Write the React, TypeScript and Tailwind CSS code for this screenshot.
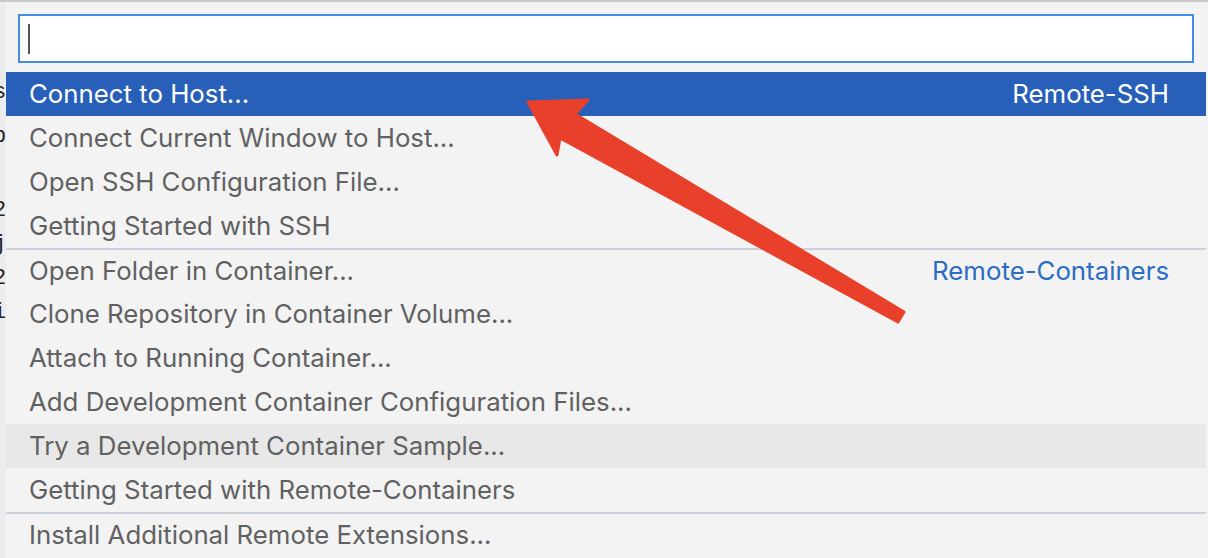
import React from 'react';

type Item = {
  label: string;
  detail?: string;
  selected?: boolean;
  hovered?: boolean;
  separator?: boolean;
};

const items: Item[] = [
  { label: 'Connect to Host...', detail: 'Remote-SSH', selected: true },
  { label: 'Connect Current Window to Host...' },
  { label: 'Open SSH Configuration File...' },
  { label: 'Getting Started with SSH' },
  { label: 'Open Folder in Container...', detail: 'Remote-Containers', separator: true },
  { label: 'Clone Repository in Container Volume...' },
  { label: 'Attach to Running Container...' },
  { label: 'Add Development Container Configuration Files...' },
  { label: 'Try a Development Container Sample...', hovered: true },
  { label: 'Getting Started with Remote-Containers' },
  { label: 'Install Additional Remote Extensions...', separator: true },
];

// bits of editor text peeking out on the left
const editorBits = [
  { ch: 's', top: 'mt-[80px]' },
  { ch: 'b', top: 'mt-[22px]' },
  { ch: '2', top: 'mt-[52px]' },
  { ch: 'j', top: 'mt-[12px]' },
  { ch: '2', top: 'mt-[12px]' },
  { ch: 'i', top: 'mt-[12px]' },
];

const Arrow = () => (
  <svg
    className="absolute inset-0 pointer-events-none"
    width="1208"
    height="558"
    viewBox="0 0 1208 558"
  >
    <polygon
      points="528,100 588,98 575,112 904,310 898,320 560,136 557,153"
      fill="#e8402a"
      stroke="#e8402a"
      strokeWidth="3"
      strokeLinejoin="round"
    />
  </svg>
);

export default function App() {
  return (
    <div className="relative w-[1208px] h-[558px] overflow-hidden bg-[#f3f3f3] border-t-2 border-[#c8c8c8] font-['Inter','Noto_Sans',sans-serif]">
      <div className="flex h-full">
        {/* editor behind the palette */}
        <div className="w-[6px] shrink-0 overflow-hidden bg-[#ececec] flex flex-col">
          {editorBits.map((b, i) => (
            <div
              key={i}
              className={`${b.top} -ml-[7px] h-[22px] font-['Liberation_Mono',monospace] text-[22px] leading-[22px] text-[#222]`}
            >
              {b.ch}
            </div>
          ))}
        </div>

        {/* quick pick */}
        <div className="flex-1 flex flex-col pt-[12px]">
          <div className="mx-[12px] mb-[9px] h-[49px] bg-white border-2 border-[#3f8de6] flex items-center pl-[8px]">
            <div className="w-[2px] h-[30px] bg-[#555]" />
          </div>

          {items.map((item) => (
            <div
              key={item.label}
              className={`h-[44px] flex items-center justify-between pl-[23px] pr-[37px] text-[25.8px] ${
                item.separator ? 'border-t-2 border-[#cdd0da]' : ''
              } ${
                item.selected
                  ? 'bg-[#285fb9] text-white'
                  : item.hovered
                  ? 'bg-[#e8e8e8] text-[#616161]'
                  : 'text-[#616161]'
              }`}
            >
              <span>{item.label}</span>
              {item.detail && (
                <span className={item.selected ? 'text-white' : 'text-[#2b6cc4]'}>
                  {item.detail}
                </span>
              )}
            </div>
          ))}
        </div>
        <div className="w-[2px] shrink-0" />
      </div>
      <Arrow />
    </div>
  );
}
